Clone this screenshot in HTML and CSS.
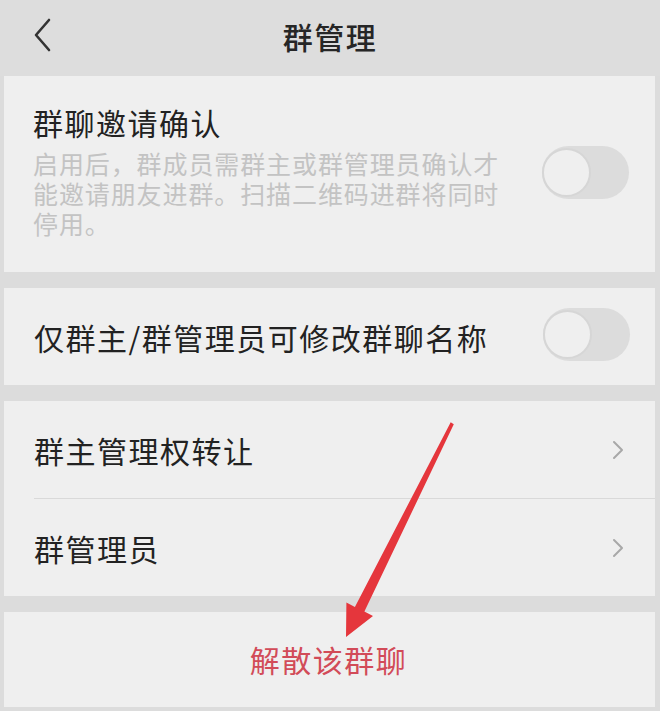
FILE: index.html
```html
<!DOCTYPE html>
<html lang="zh-CN">
<head>
<meta charset="utf-8">
<title>群管理</title>
<link rel="stylesheet" href="styles.css">
</head>
<body>
<div class="page">
  <header class="topbar">
    <svg class="back" width="24" height="40" viewBox="0 0 24 40"><polyline points="17,4 4,19 17,34" fill="none" stroke="#333" stroke-width="2.6" stroke-linecap="round" stroke-linejoin="round"/></svg>
    <h1 class="title">群管理</h1>
  </header>

  <section class="card card-invite">
    <div class="invite-text">
      <div class="label">群聊邀请确认</div>
      <div class="desc">启用后，群成员需群主或群管理员确认才<br>能邀请朋友进群。扫描二维码进群将同时<br>停用。</div>
    </div>
    <div class="switch"><div class="knob"></div></div>
  </section>

  <section class="card">
    <div class="row">
      <div class="label">仅群主/群管理员可修改群聊名称</div>
      <div class="switch"><div class="knob"></div></div>
    </div>
  </section>

  <section class="card">
    <div class="row row-link">
      <div class="label">群主管理权转让</div>
      <svg class="chev" width="14" height="22" viewBox="0 0 14 22"><polyline points="3,3 11,11 3,19" fill="none" stroke="#a8a8a8" stroke-width="2" stroke-linecap="round" stroke-linejoin="round"/></svg>
    </div>
    <div class="divider"></div>
    <div class="row row-link">
      <div class="label">群管理员</div>
      <svg class="chev" width="14" height="22" viewBox="0 0 14 22"><polyline points="3,3 11,11 3,19" fill="none" stroke="#a8a8a8" stroke-width="2" stroke-linecap="round" stroke-linejoin="round"/></svg>
    </div>
  </section>

  <section class="card card-danger">
    <div class="danger">解散该群聊</div>
  </section>

  <svg class="arrow" width="660" height="711" viewBox="0 0 660 711">
    <polygon points="450.7,422.3 453.8,424.2 364.4,611.5 373,616 346,637 346.4,602.5 354.9,606.9" fill="#e5363c"/>
  </svg>
</div>
</body>
</html>
```

FILE: styles.css
```css
* { box-sizing: border-box; }
html, body { margin: 0; padding: 0; }
body {
  background: #dcdcdc;
  font-family: "Noto Sans CJK SC", "Noto Sans", sans-serif;
  width: 660px;
  height: 711px;
  overflow: hidden;
}
.page {
  position: relative;
  width: 660px;
  height: 711px;
  display: flex;
  flex-direction: column;
}
.topbar {
  height: 76px;
  background: #dddddd;
  display: flex;
  align-items: center;
  justify-content: center;
  position: relative;
}
.back {
  position: absolute;
  left: 32px;
  top: 16px;
}
.title {
  margin: 0;
  font-size: 30px;
  font-weight: 500;
  color: #262626;
  letter-spacing: 1.5px;
  line-height: 40px;
  margin-top: -4px;
}
.card {
  background: #efefef;
  margin: 0 5px 16px 4px;
}
.card-invite {
  height: 196px;
  display: flex;
  align-items: center;
  padding: 0 26px 0 29px;
  justify-content: space-between;
}
.invite-text {
  display: flex;
  flex-direction: column;
  margin-top: -6px;
}
.label {
  font-size: 30px;
  line-height: 36px;
  color: #222;
  letter-spacing: 1.5px;
}
.desc {
  margin-top: 8px;
  font-size: 25px;
  line-height: 30px;
  color: #c3c3c3;
  letter-spacing: 0.9px;
}
.switch {
  width: 87px;
  height: 53px;
  border-radius: 27px;
  background: #dcdcdc;
  position: relative;
  flex: none;
  margin-top: -4px;
}
.knob {
  position: absolute;
  left: 0;
  top: 2px;
  width: 49px;
  height: 49px;
  border-radius: 50%;
  background: #efefef;
  border: 2px solid #d6d6d6;
}
.row {
  height: 97px;
  display: flex;
  align-items: center;
  justify-content: space-between;
  padding: 0 25px 0 30px;
}
.row-link {
  height: 97px;
  padding-right: 30px;
}
.divider {
  height: 1px;
  background: #d9d9d9;
  margin-left: 30px;
}
.card-danger {
  height: 95px;
  display: flex;
  align-items: center;
  justify-content: center;
  margin-bottom: 0;
}
.danger {
  font-size: 30px;
  line-height: 36px;
  color: #d24b58;
  letter-spacing: 1.5px;
  margin-top: -2px;
  margin-left: -2px;
}
.arrow {
  position: absolute;
  left: 0;
  top: 0;
  pointer-events: none;
}
```
